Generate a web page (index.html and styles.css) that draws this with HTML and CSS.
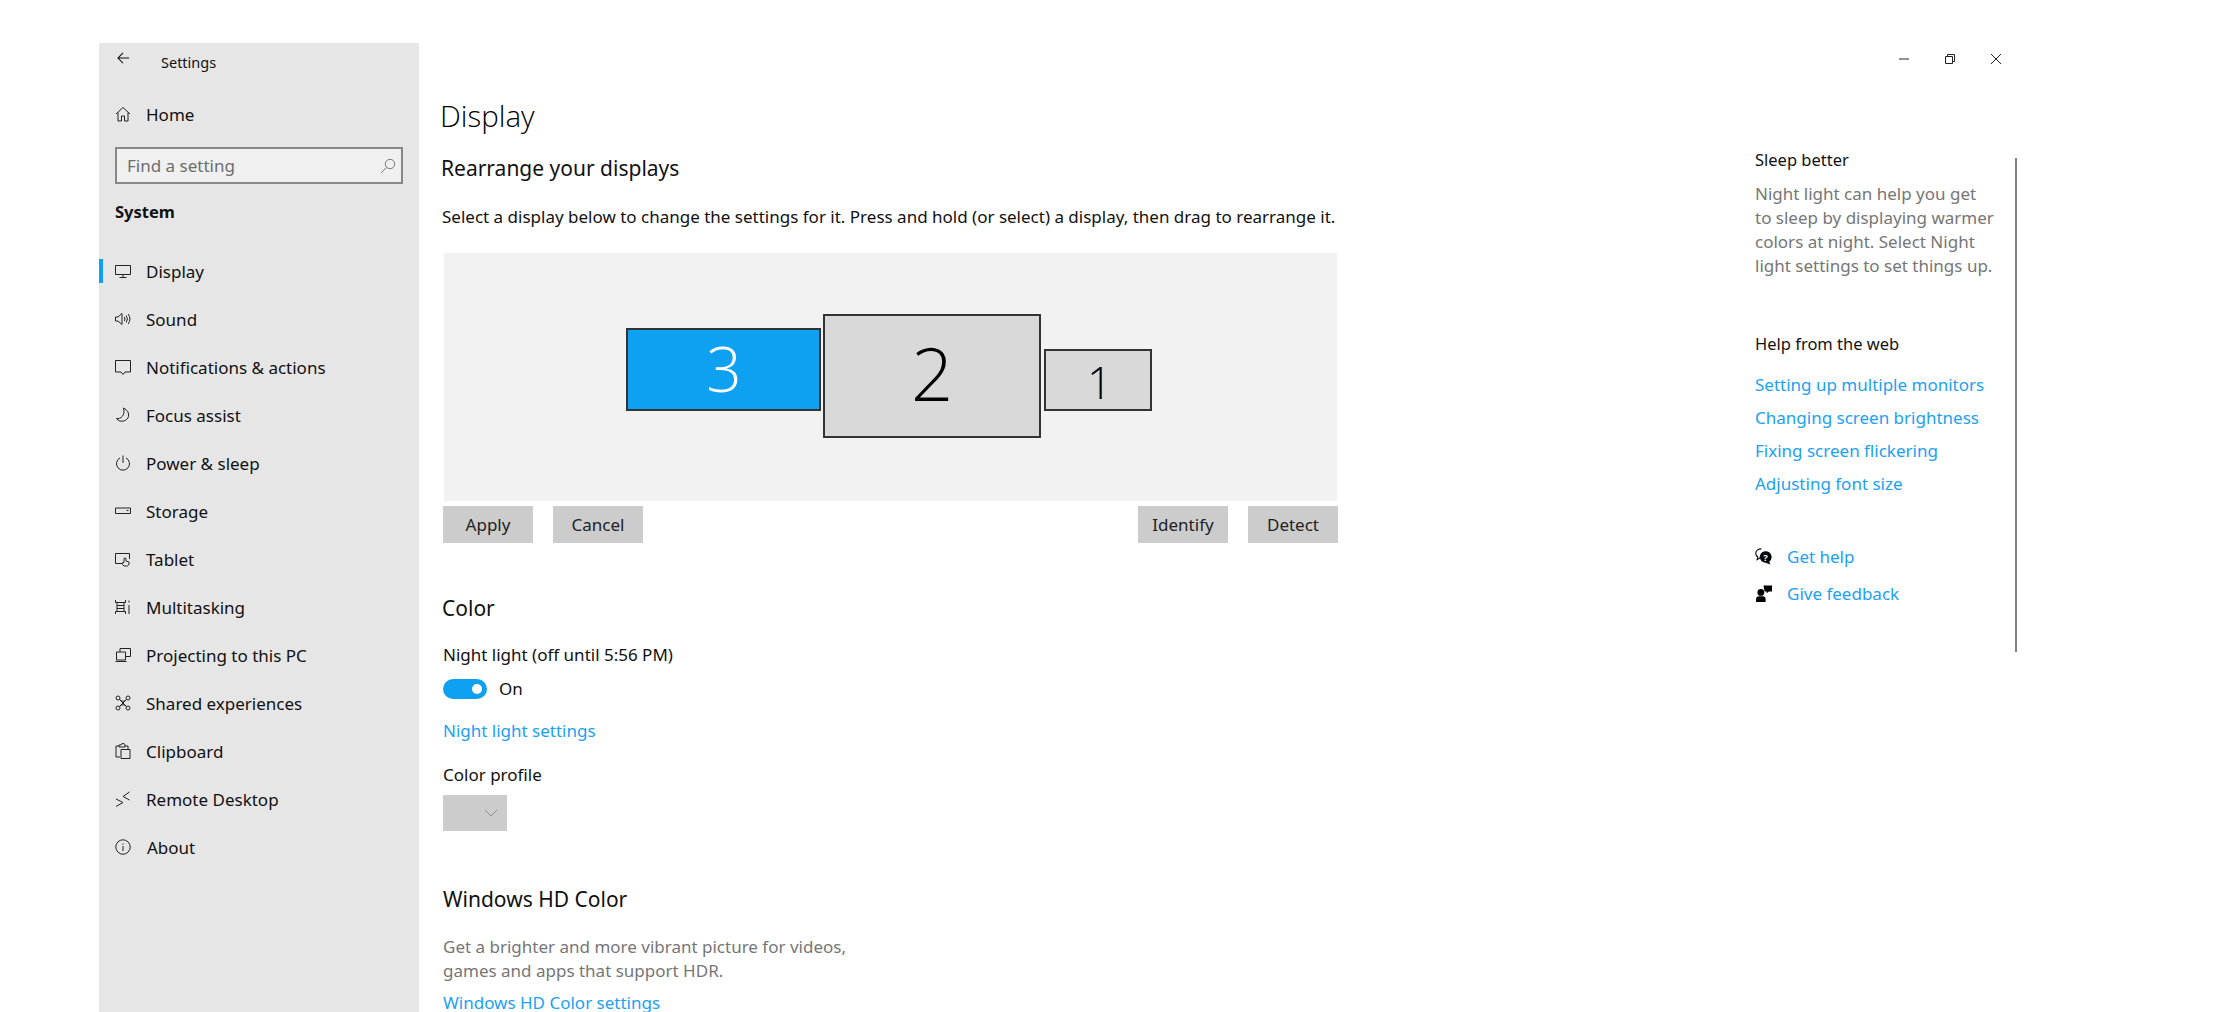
FILE: index.html
```html
<!DOCTYPE html>
<html lang="en">
<head>
<meta charset="utf-8">
<title>Settings</title>
<link rel="stylesheet" href="styles.css">
</head>
<body>
<div class="window">
  <nav class="sidebar">
    <div class="app-bar">
      <svg class="back" viewBox="0 0 14 14"><path d="M13 6.5H1M6.5 1 1 6.5 6.5 12"/></svg>
      <span class="app-title">Settings</span>
    </div>
    <div class="nav-item home">
      <svg class="ico" viewBox="0 0 16 16"><path d="M1 8 8 1.5 15 8M3 6.5V15h3.5v-5h3v5H13V6.5"/></svg>
      <span>Home</span>
    </div>
    <div class="search">
      <span>Find a setting</span>
      <svg class="search-ico" viewBox="0 0 16 16"><circle cx="10" cy="6" r="4.7"/><path d="M6.6 9.4 1 15"/></svg>
    </div>
    <div class="group">System</div>
    <ul class="nav-list">
      <li class="nav-item active"><svg class="ico" viewBox="0 0 16 16"><path d="M.5 2.500h15v9H.5zM8 11.500v3M4.500 14.500h7"/></svg><span>Display</span></li>
      <li class="nav-item"><svg class="ico" viewBox="0 0 16 16"><path d="M.5 6h2.500L7 2.500v11L3 10H.5zM9.300 6q1.400 2 0 4M11.200 4.500q2.500 3.500 0 7M13.200 3q3.500 5 0 10"/></svg><span>Sound</span></li>
      <li class="nav-item"><svg class="ico" viewBox="0 0 16 16"><path d="M.5 1.500h15V13H10l-2 2.500L6 13H.5z"/></svg><span>Notifications &amp; actions</span></li>
      <li class="nav-item"><svg class="ico" viewBox="0 0 16 16"><path d="M8.500 1q6 3 5 8.500C12.500 14 5 16.500 1.500 11.500 6 12.500 10.500 8 8.500 1z"/></svg><span>Focus assist</span></li>
      <li class="nav-item"><svg class="ico" viewBox="0 0 16 16"><path d="M8 .5V8M5 2.900a6.500 6.500 0 1 0 6 0"/></svg><span>Power &amp; sleep</span></li>
      <li class="nav-item"><svg class="ico" viewBox="0 0 16 16"><path d="M.5 5h15v5.500H.5zM11.500 7.500h2"/></svg><span>Storage</span></li>
      <li class="nav-item"><svg class="ico" viewBox="0 0 16 16"><path d="M7 12.500H.5v-10h14V8M9 15q-2-1.500-2-3l2-.5V7.500q1-1.200 2 0V10l3 1v2q-.5 1.500-1.500 2z"/></svg><span>Tablet</span></li>
      <li class="nav-item"><svg class="ico" viewBox="0 0 16 16"><path d="M.5 1v2.500h10V1M2 3.500v9M9 3.500v9M.5 15v-2.500h10V15M2 6.500h7M2 9.500h7M14 1.500v2M14 6v9"/></svg><span>Multitasking</span></li>
      <li class="nav-item"><svg class="ico" viewBox="0 0 16 16"><path d="M5 5V1.500h10.500v8H11M1.500 5h9v8h-9zM.5 14.500h11"/></svg><span>Projecting to this PC</span></li>
      <li class="nav-item"><svg class="ico" viewBox="0 0 16 16"><circle cx="3" cy="3" r="2"/><circle cx="13" cy="3" r="2"/><circle cx="3" cy="13" r="2"/><circle cx="13" cy="13" r="2"/><path d="M4.500 4.500q3.500 3.500 7 0M4.500 11.500q3.500-3.500 7 0M4.500 4.500l7 7M11.500 4.500l-7 7"/></svg><span>Shared experiences</span></li>
      <li class="nav-item"><svg class="ico" viewBox="0 0 16 16"><path d="M5 14H1V3h3M10 3h3v3M4 2h2q0-1.500 2-1.500T10 2v2H4zM6 6.500h9v9H6z"/></svg><span>Clipboard</span></li>
      <li class="nav-item"><svg class="ico" viewBox="0 0 16 16"><path d="m1 8 7 3.500L1 15.500M14.500 1 8 5.500l6.500 3.500"/></svg><span>Remote Desktop</span></li>
      <li class="nav-item"><svg class="ico" viewBox="0 0 16 16"><circle cx="8" cy="8" r="7.200"/><path d="M8 7v5M8 4.500v1.200"/></svg><span class="about">About</span></li>
    </ul>
  </nav>

  <main class="content">
    <h1 class="page-title">Display</h1>
    <h2 class="sub rearrange">Rearrange your displays</h2>
    <p class="select-hint">Select a display below to change the settings for it. Press and hold (or select) a display, then drag to rearrange it.</p>
    <div class="canvas">
      <div class="monitor m3">3</div>
      <div class="monitor m2">2</div>
      <div class="monitor m1">1</div>
    </div>
    <div class="buttons">
      <div class="btn-group"><button class="btn">Apply</button><button class="btn">Cancel</button></div>
      <div class="btn-group"><button class="btn">Identify</button><button class="btn">Detect</button></div>
    </div>
    <h2 class="sub color-head">Color</h2>
    <div class="label night">Night light (off until 5:56 PM)</div>
    <div class="toggle-row"><span class="toggle"><span class="knob"></span></span><span>On</span></div>
    <a class="link night-link">Night light settings</a>
    <div class="label profile">Color profile</div>
    <div class="dropdown"><svg viewBox="0 0 14 8"><path d="M1 1l6 6 6-6"/></svg></div>
    <h2 class="sub hd-head">Windows HD Color</h2>
    <p class="muted hd-text">Get a brighter and more vibrant picture for videos,<br>games and apps that support HDR.</p>
    <a class="link hd-link">Windows HD Color settings</a>
  </main>

  <div class="right">
    <div class="controls">
      <svg viewBox="0 0 10 10"><path d="M0 5h10"/></svg>
      <svg viewBox="0 0 10 10"><path d="M.5 2.500h7v7h-7zM2.500 2.500V.5h7v7h-2"/></svg>
      <svg viewBox="0 0 10 10"><path d="M0 0l10 10M10 0 0 10"/></svg>
    </div>
    <div class="right-body">
      <aside class="aside">
        <div class="aside-head">Sleep better</div>
        <p class="muted sleep-text">Night light can help you get<br>to sleep by displaying warmer<br>colors at night. Select Night<br>light settings to set things up.</p>
        <div class="aside-head web">Help from the web</div>
        <div class="web-links">
          <a class="link">Setting up multiple monitors</a>
          <a class="link">Changing screen brightness</a>
          <a class="link">Fixing screen flickering</a>
          <a class="link">Adjusting font size</a>
        </div>
        <div class="help-row first">
          <svg class="ico-solid" viewBox="0 0 16 16"><path class="line" d="M6 .8C3 .8.700 2.500.700 5c0 1.500.8 2.700 2 3.500L2 11l3-1.800"/><path d="M10 3a5.500 5.500 0 0 0-3.500 9.700c1 .7 2.300 1.100 3.500 1.100l4.500 1.700-1.100-2.600A5.500 5.500 0 0 0 10 3z"/><text x="10" y="12" class="q">?</text></svg>
          <a class="link">Get help</a>
        </div>
        <div class="help-row">
          <svg class="ico-solid" viewBox="0 0 16 16"><circle cx="5.500" cy="7" r="3.200"/><path d="M1 16v-2.500q0-2.800 2.800-2.800h3.400q2.800 0 2.800 2.800V16zM8 .5h8v5.500h-3l-2 1.800V6H9z"/></svg>
          <a class="link">Give feedback</a>
        </div>
      </aside>
      <div class="scrollbar"></div>
    </div>
  </div>
</div>
</body>
</html>
```

FILE: styles.css
```css
* { box-sizing: border-box; }
html, body { margin: 0; height: 100%; overflow: hidden; background: #fff; }
body {
  font-family: "Noto Sans", "Open Sans", sans-serif;
  font-size: 17px;
  color: #111;
}
p, h1, h2, ul { margin: 0; padding: 0; font-weight: 400; }
ul { list-style: none; }

.window { display: flex; height: 1012px; padding: 43px 0 0 99px; }

/* Sidebar */
.sidebar { width: 320px; flex: none; background: #e6e6e6; }
.app-bar { display: flex; align-items: center; height: 38px; padding-left: 18px; }
.back { width: 13px; height: 13px; fill: none; stroke: #111; stroke-width: 1.1; margin-top: -8px; }
.app-title { font-size: 14.500px; margin-left: 31px; }
.nav-item { position: relative; display: flex; align-items: center; height: 48px; padding-left: 16px; }
.home { margin-top: 9px; }
.ico { width: 16px; height: 16px; fill: none; stroke: #222; stroke-width: 1; margin-right: 15px; flex: none; }
.about { margin-left: 1px; }
.search {
  display: flex; align-items: center; justify-content: space-between;
  height: 37px; width: 288px; margin: 9px 0 0 16px; padding: 0 5px 0 10px;
  background: #f0f0f0; border: 2px solid #888; color: #6d6d6d;
}
.search-ico { width: 16px; height: 16px; fill: none; stroke: #777; stroke-width: 1; }
.group { margin: 14px 0 0 16px; line-height: 28px; font-weight: 700; font-size: 16.500px; }
.nav-list { margin-top: 21px; }
.active::before {
  content: ""; position: absolute; left: 0; top: 12px; width: 4px; height: 24px; background: #0ea1f1;
}

/* Main */
.content { flex: 1; padding-left: 22px; min-width: 0; }
.page-title { font-size: 29.500px; font-weight: 300; line-height: 40px; margin-top: 53px; margin-left: -1px; color: #000; font-family: "Open Sans", sans-serif; }
.sub { font-size: 21px; line-height: 30px; }
.rearrange { margin-top: 17px; }
.select-hint { margin: 19px 0 0 1px; line-height: 30px; white-space: nowrap; }
.canvas {
  display: flex; align-items: flex-start; gap: 2px;
  width: 893px; height: 248px; margin: 21px 0 0 3px; padding: 61px 0 0 182px; background: #f2f2f2;
}
.monitor {
  display: flex; align-items: center; justify-content: center; flex: none;
  border: 2px solid #333; background: #d9d9d9; font-family: "Open Sans", sans-serif; font-weight: 300; color: #000;
}
.m3 { width: 195px; height: 83px; margin-top: 14px; padding: 0 0 3px 1px; background: #0ea1f1; color: #fff; font-size: 62px; }
.m2 { width: 218px; height: 124px; margin-right: 1px; padding-bottom: 8px; font-size: 74px; }
.m1 { width: 108px; height: 62px; margin-top: 35px; padding: 3px 0 0 3px; font-size: 44px; }
.buttons { display: flex; justify-content: space-between; width: 895px; margin: 5px 0 0 2px; }
.btn-group { display: flex; gap: 20px; }
.btn {
  width: 90px; height: 37px; padding: 0; border: 0; background: #ccc; color: #222;
  font: inherit;
}
.color-head { margin-top: 50px; margin-left: 1px; }
.label { margin-left: 2px; line-height: 24px; }
.night { margin-top: 20px; }
.toggle-row { display: flex; align-items: center; gap: 12px; margin: 10px 0 0 2px; }
.toggle { display: flex; align-items: center; justify-content: flex-end; width: 44px; height: 20px; padding-right: 5px; border-radius: 10px; background: #0ea1f1; }
.knob { width: 10px; height: 10px; border-radius: 50%; background: #fff; }
.link { color: #1ba1f1; }
.night-link { display: block; margin: 19px 0 0 2px; line-height: 24px; }
.profile { margin-top: 20px; }
.dropdown { display: flex; align-items: center; justify-content: flex-end; width: 64px; height: 36px; margin: 8px 0 0 2px; padding-right: 9px; background: #ccc; }
.dropdown svg { width: 14px; height: 8px; fill: none; stroke: #8f8f8f; stroke-width: 1; }
.hd-head { margin-top: 53px; margin-left: 2px; }
.muted { color: #767676; }
.hd-text { margin: 21px 0 0 2px; line-height: 24px; }
.hd-link { display: block; margin: 8px 0 0 2px; line-height: 24px; }

/* Right column */
.right { width: 263px; margin-right: 203px; flex: none; }
.controls { display: flex; justify-content: flex-end; align-items: center; gap: 36px; height: 32px; padding-right: 17px; }
.controls svg { width: 10px; height: 10px; fill: none; stroke: #222; stroke-width: 1; }
.right-body { display: flex; justify-content: space-between; align-items: flex-start; margin-top: 73px; }
.aside { width: 250px; }
.aside-head { line-height: 24px; font-size: 16.500px; }
.sleep-text { margin-top: 10px; line-height: 24px; white-space: nowrap; }
.web { margin-top: 54px; }
.web-links { display: flex; flex-direction: column; margin-top: 12px; }
.web-links .link { line-height: 33px; white-space: nowrap; }
.help-row { display: flex; align-items: center; gap: 15px; height: 37px; }
.help-row.first { margin-top: 38px; }
.ico-solid { width: 17px; height: 17px; flex: none; fill: #000; }
.ico-solid .line { fill: #fff; stroke: #000; stroke-width: 1; }
.q { fill: #fff; font-size: 9px; font-weight: 700; text-anchor: middle; font-family: "Noto Sans", sans-serif; }
.scrollbar { width: 2px; height: 494px; margin: 10px 1px 0 0; background: #808080; flex: none; }
```
